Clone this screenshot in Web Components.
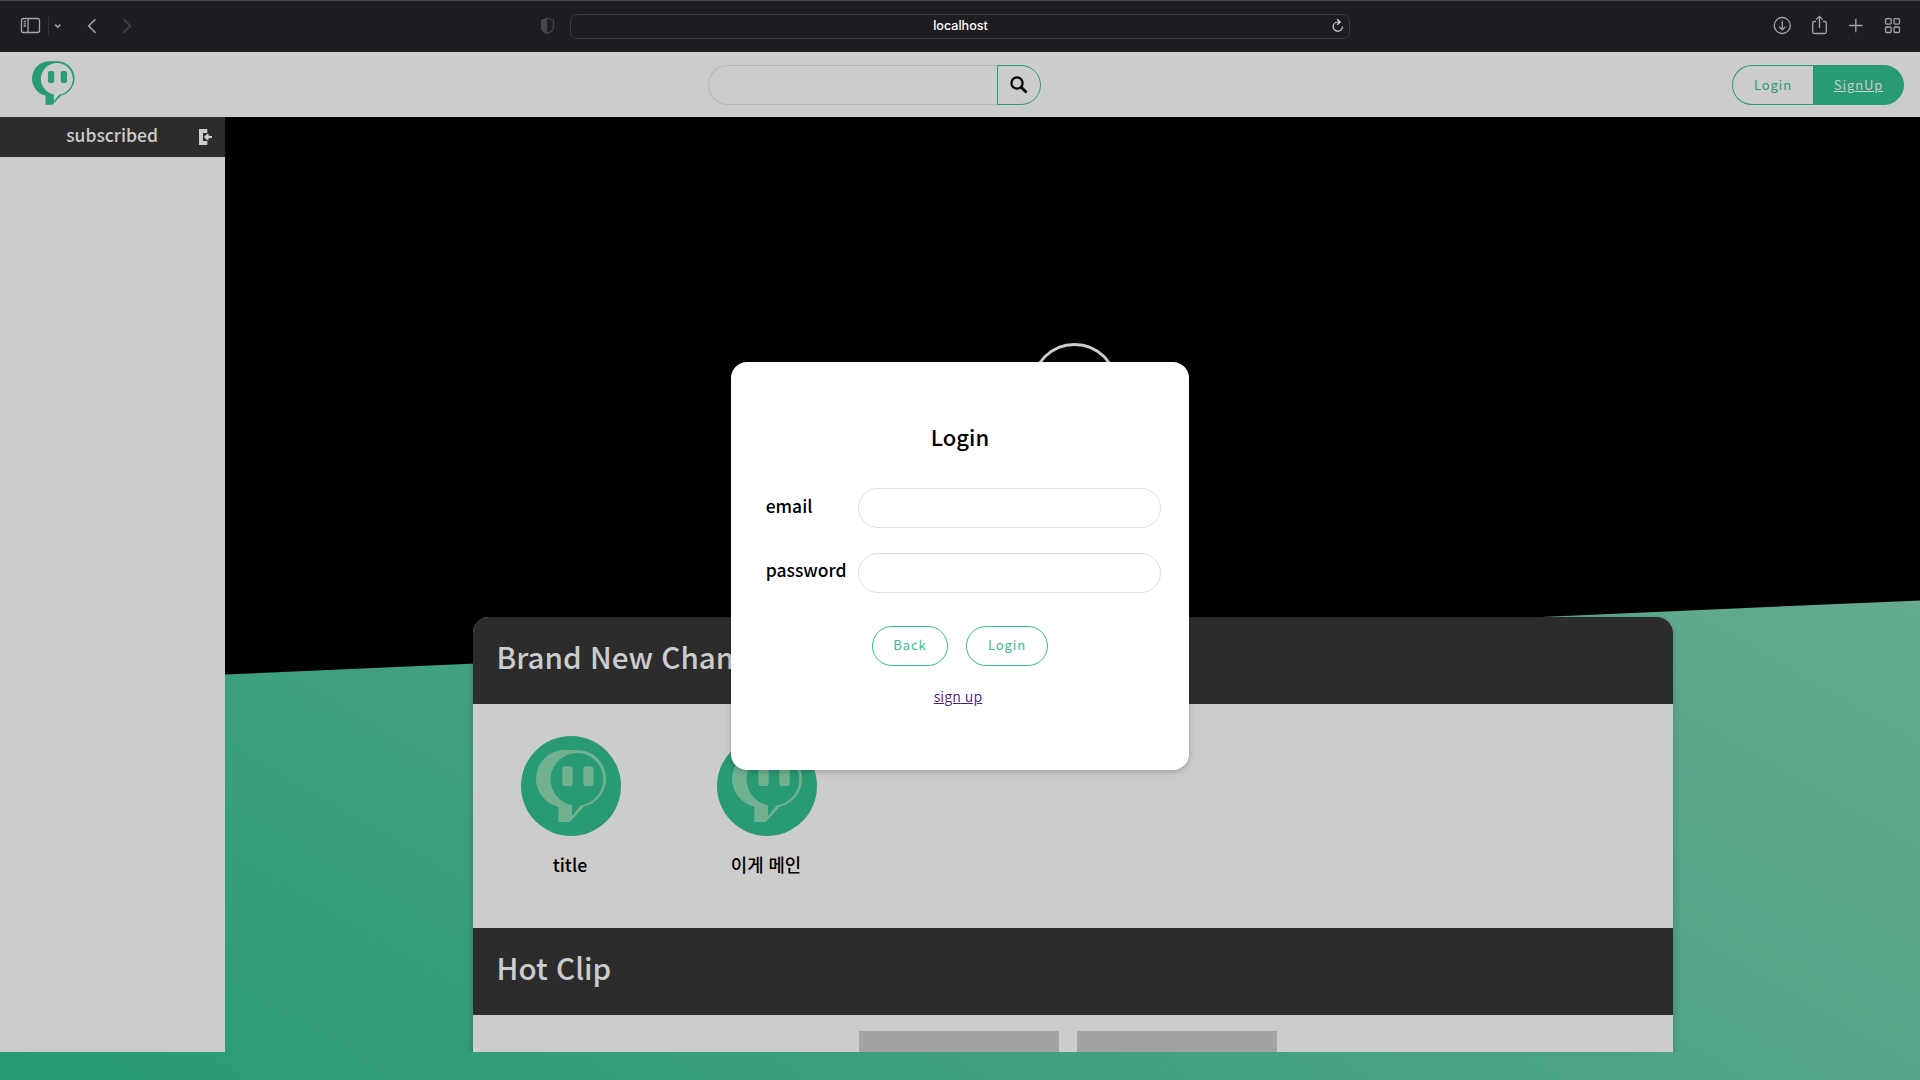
<!DOCTYPE html>
<html lang="ko">
<head>
<meta charset="utf-8">
<title>localhost</title>
<style>
html, body { margin: 0; height: 100%; }
body { overflow: hidden; font-family: "Noto Sans CJK KR", "Open Sans", sans-serif; color: #000; --green: #289b74; --shade: #ccc; --dark: #2c2c2c; }
</style>
</head>
<body>
<script>
const define = (name, html) => {
  const template = document.createElement('template');
  template.innerHTML = html;
  customElements.define(name, class extends HTMLElement {
    constructor() {
      super();
      this.attachShadow({ mode: 'open' }).append(template.content.cloneNode(true));
    }
  });
};

define('speech-logo', `
<style>:host{display:block} svg{display:block;width:100%;height:100%}</style>
<svg viewBox="0 0 210 216" fill="currentColor">
<path fill-rule="evenodd" d="M86 0H124A86 86 0 0 1 144 169.7L101 216H67V170A86 86 0 0 1 0 86A86 86 0 0 1 86 0ZM108 165.6V198L134 166.2A79 79 0 1 0 108 165.6Z"/>
<rect x="79" y="49" width="31" height="59" rx="10"/><rect x="142" y="49" width="31" height="59" rx="10"/>
</svg>`);

define('browser-bar', `
<style>
:host{display:flex;box-sizing:border-box;height:52px;flex:none;background:#1d1c20;border-top:1px solid #47474a;align-items:flex-start;color:#a5a5a8}
svg{display:block;fill:none;stroke:currentColor;flex:none}
.shield{color:#47464b}
.left{display:flex;width:541px}
.url{box-sizing:border-box;width:780px;height:25px;margin-top:13px;border:1px solid #39383c;border-radius:7px;display:flex;align-items:center;justify-content:center;color:#fff;font:500 12.6px/23px Inter,"Liberation Sans",sans-serif}
.url span{flex:1;text-align:center;padding-left:25px;margin-top:-2px}
.url svg{color:#ddd}
</style>
<div class="left"><svg width="541" height="51" viewBox="0 1 541 51" stroke-width="1.3">
<rect x="21.5" y="18.5" width="18" height="14" rx="2"/><path d="M28 18.5V32.5M23.7 21.5H26M23.7 23.8H26M23.7 26H26"/>
<path d="M48.5 17V35" stroke="#333237" stroke-width="1"/><path d="M55.2 24.6L57.8 27.2L60.4 24.6" stroke-width="1.6"/>
<path d="M95.5 19.3L88.7 26L95.5 32.7" stroke-width="1.6"/><path d="M123.5 19.3L130.3 26L123.5 32.7" stroke="#47464b" stroke-width="1.6"/></svg></div>
<svg class="shield" width="29" height="51" viewBox="541 1 29 51" stroke-width="1.2"><path d="M547.5 18.2L553.4 20.3V27.5C553.4 30.5 550.3 32.2 547 33.6C544.5 32.2 541.2 30.5 541.2 27.5V20.3Z"/><path fill="#47464b" stroke="none" d="M547.2 18.2L541 20.3V27.5C541 30.5 544.5 32.2 547.2 33.6Z"/></svg>
<div class="url"><span>localhost</span><svg width="24" height="23" viewBox="1325 15 24 23" stroke-width="1.2"><path d="M1340.1 22H1337.8A4.6 4.6 0 1 0 1342.4 26.6M1337.2 19.2L1340.2 22L1337.2 24.8"/></svg></div>
<svg width="570" height="51" viewBox="1350 1 570 51" stroke-width="1.3">
<circle cx="1782.3" cy="25.5" r="8"/><path d="M1782.3 21V29.6M1779.1 26.6L1782.3 29.8L1785.5 26.6"/>
<path d="M1816 21.5H1814.3Q1812.7 21.5 1812.7 23V32Q1812.7 33.5 1814.3 33.5H1824.7Q1826.3 33.5 1826.3 32V23Q1826.3 21.5 1824.7 21.5H1823M1819.5 28V16.5M1816.2 19.6L1819.5 16.3L1822.8 19.6"/>
<path d="M1855.8 18.7V32.3M1849 25.5H1862.6"/>
<rect x="1885.6" y="18.6" width="5.5" height="5.5" rx="1"/><rect x="1894" y="18.6" width="5.5" height="5.5" rx="1"/><rect x="1885.6" y="27" width="5.5" height="5.5" rx="1"/><rect x="1894" y="27" width="5.5" height="5.5" rx="1"/>
</svg>`);

define('site-header', `
<style>
:host{display:flex;box-sizing:border-box;height:65px;flex:none;background:var(--shade);align-items:center;justify-content:space-between;padding:1px 16px 0 32px}
speech-logo{width:42.5px;height:44px;color:var(--green);margin-top:-4px}
.search{display:flex;width:333px;height:40px}
.field{box-sizing:border-box;width:289px;border:1px solid #b8b8b8;border-right:0;border-radius:20px 0 0 20px}
.go{box-sizing:border-box;width:44px;border:1px solid var(--green);border-radius:0 20px 20px 0;display:flex;align-items:center;justify-content:center}
.side{flex:1 1 0;display:flex}
.l{flex:none;width:676px}.r{justify-content:flex-end}
.auth{display:flex;height:40px;font-size:13px;letter-spacing:.9px;line-height:37px}
.auth span{box-sizing:border-box;border:1px solid var(--green);text-align:center}
.in{width:81px;border-radius:20px 0 0 20px;color:var(--green);border-right:0!important}
.up{width:91px;border-radius:0 20px 20px 0;background:var(--green);color:var(--shade);text-decoration:underline}
</style>
<div class="side l"><speech-logo></speech-logo></div>
<div class="search"><div class="field"></div><div class="go"><svg width="18" height="18" viewBox="0 0 18 18" fill="none" stroke="#000"><circle cx="7" cy="7" r="5.6" stroke-width="2.3"/><path d="M11 11L16.5 16.5" stroke-width="2.8"/></svg></div></div>
<div class="side r"><div class="auth"><span class="in">Login</span><span class="up">SignUp</span></div></div>`);

define('side-bar', `
<style>
:host{display:flex;flex-direction:column;width:225px;flex:none;background:var(--shade)}
.head{box-sizing:border-box;height:40px;background:var(--dark);color:var(--shade);display:flex;align-items:center;justify-content:flex-end;padding-right:12.5px;font-size:17.5px;font-weight:500;line-height:30px}
span{margin:-4px 40.5px 0 0}
</style>
<div class="head"><span>subscribed</span><svg width="14" height="17" viewBox="0 0 14 17"><path fill="#ccc" d="M0 0H8.3V4H4V12H8.3V16H0Z"/><path d="M13 8H7" stroke="#ccc" stroke-width="2.2"/><path fill="#ccc" d="M4.8 8L8.6 4.6L9.6 5.6V10.4L8.6 11.4Z"/></svg></div>`);

define('channel-item', `
<style>
:host{display:flex;flex-direction:column;align-items:center;width:100px}
.disc{width:100px;height:100px;border-radius:50%;background:#299b74;display:flex;align-items:center;justify-content:center}
speech-logo{width:70px;height:72px;color:#72b18f}
.name{font-size:17.8px;font-weight:500;line-height:26px;margin-top:15px;white-space:nowrap;padding-right:2px}
</style>
<div class="disc"><speech-logo></speech-logo></div><div class="name"><slot></slot></div>`);

define('content-section', `
<style>
:host{display:block}
.title{box-sizing:border-box;height:87px;background:var(--dark);color:var(--shade);font-size:29.6px;font-weight:500;line-height:80px;padding-left:23.6px}
.body{display:flex}
</style>
<div class="title"><slot name="title"></slot></div><div class="body"><slot></slot></div>`);

define('main-stage', `
<style>
:host{display:flex;flex:1;position:relative;overflow:hidden;justify-content:center}
.black{position:absolute;inset:0;background:#000;clip-path:polygon(0 0,100% 0,100% 483.4px,0 557.5px)}
.ring{position:absolute;left:805.5px;top:226px;width:81px;height:81px;border:3px solid #ccc;border-radius:50%}
.card{position:relative;width:1200px;height:520px;margin:500px 0 0 1px;background:var(--shade);border-radius:16px 16px 0 0;overflow:hidden;box-shadow:0 2px 6px rgba(0,0,0,.22);flex:none}
.channels{display:flex;gap:96px;height:192px;padding:32px 0 0 48px}
.clips{display:flex;gap:18px;padding:16px 0 0 386px}
.clips i{display:block;width:200px;height:112px;background:#a3a3a3}
</style>
<div class="black"></div><div class="ring"></div>
<div class="card">
<content-section><span slot="title">Brand New Channel</span><div class="channels"><channel-item>title</channel-item><channel-item>이게 메인</channel-item></div></content-section>
<content-section><span slot="title">Hot Clip</span><div class="clips"><i></i><i></i></div></content-section>
</div>`);

define('pill-button', `
<style>:host{display:block;box-sizing:border-box;height:40px;border:1px solid #30c290;border-radius:20px;color:#30c290;font-size:13px;line-height:35px;letter-spacing:.9px;text-align:center;background:#fff}</style><slot></slot>`);

define('form-row', `
<style>
:host{display:flex;height:40px;align-items:center;font-size:17.5px;font-weight:500}
label{box-sizing:border-box;width:93px;padding-left:.7px;line-height:30px;margin-top:var(--label-shift,-5px)}
.input{box-sizing:border-box;width:303px;height:40px;border:1px solid #e0e0e0;border-radius:20px}
</style><label><slot></slot></label><div class="input"></div>`);

define('login-dialog', `
<style>
:host{display:flex;flex-direction:column;box-sizing:border-box;position:absolute;left:731px;top:362px;width:458px;height:408px;padding:59px 27px 0 34px;background:#fff;border-radius:16px;box-shadow:0 2px 6px rgba(0,0,0,.22)}
h2{margin:0 7px 37px 0;height:30px;font-size:22px;font-weight:500;line-height:30px;text-align:center}
form-row+form-row{margin-top:25px;--label-shift:-7px}
.actions{display:flex;justify-content:center;gap:18px;margin:33px 7px 0 0}
a{align-self:center;margin:17px 11px 0 0;font-size:14.3px;font-weight:350;line-height:26px;color:#551a8b;text-decoration:underline}
</style>
<h2>Login</h2>
<form-row>email</form-row><form-row>password</form-row>
<div class="actions"><pill-button style="width:76px">Back</pill-button><pill-button style="width:82px">Login</pill-button></div>
<a>sign up</a>`);

define('live-app', `
<style>
:host{display:flex;flex-direction:column;height:100vh;position:relative;overflow:hidden}
.page{flex:1;display:flex;flex-direction:column;background:linear-gradient(30deg,#289a73,#7ab099)}
.row{display:flex;height:935px}
</style>
<browser-bar></browser-bar>
<div class="page"><site-header></site-header><div class="row"><side-bar></side-bar><main-stage></main-stage></div></div>
<login-dialog></login-dialog>`);
</script>
<live-app></live-app>
</body>
</html>
